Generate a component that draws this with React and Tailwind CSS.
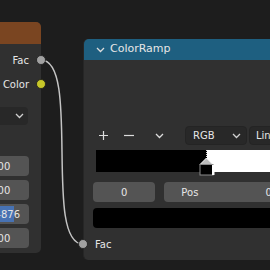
import React from "react";

const font = { fontFamily: '"DejaVu Sans", "Liberation Sans", sans-serif' };

function Chevron({ className = "" }) {
  return (
    <svg width="9" height="6" viewBox="0 0 9 6" className={className}>
      <path d="M1 1 L4.5 4.5 L8 1" fill="none" stroke="currentColor" strokeWidth="1.3" />
    </svg>
  );
}

function ColorStop() {
  return (
    <svg width="18" height="28" viewBox="0 0 18 28" className="absolute left-[102px] top-0">
      <line x1="8.5" y1="0" x2="8.5" y2="9" stroke="#d8d8d8" strokeWidth="1" strokeDasharray="1 1" />
      <path d="M8.5 8 L15 14.5 L2 14.5 Z" fill="#bdbdbd" stroke="#ffffff" strokeWidth="1" />
      <rect x="2" y="14.5" width="13" height="10.5" fill="#000000" stroke="#8a8a8a" strokeWidth="1" />
      <rect x="14" y="15" width="2.5" height="10" fill="#ffffff" />
    </svg>
  );
}

function LeftNode() {
  const fields = ["1.000", "1.000", "edit", "1.000"];
  return (
    <div className="absolute left-[-60px] top-[22px] w-[101px] h-[231px] rounded-[5px] bg-[#303030] flex flex-col">
      <div className="h-[22px] bg-[#7a4521] rounded-t-[5px]" />
      <div className="mt-[6px] h-[20px] flex items-center justify-end pr-[12px] text-[10px] text-[#e6e6e6]">Fac</div>
      <div className="mt-[4px] h-[20px] flex items-center justify-end pr-[12px] text-[10px] text-[#e6e6e6]">Color</div>
      <div className="mt-[13px] mr-[13px] h-[18px] rounded-[4px] bg-[#282828] flex items-center justify-end pr-[4px] text-[#d0d0d0]">
        <Chevron />
      </div>
      <div className="mt-[31px] flex flex-col gap-[4px] items-end pr-[12px]">
        {fields.map((f, i) =>
          f === "edit" ? (
            <div key={i} className="w-[58px] h-[20px] rounded-[4px] bg-[#545454] flex items-center text-[10px] text-[#e6e6e6] overflow-hidden">
              <span className="ml-[12px] h-[16px] flex items-center bg-[#4772b3] pl-[2px]">0.487</span>
              <span className="h-[16px] flex items-center">6</span>
            </div>
          ) : (
            <div key={i} className="w-[58px] h-[20px] rounded-[4px] bg-[#545454] flex items-center justify-center pr-[8px] text-[10px] text-[#e6e6e6]">
              {f}
            </div>
          )
        )}
      </div>
    </div>
  );
}

function ColorRampNode() {
  return (
    <div className="absolute left-[83px] top-[39px] w-[230px] h-[221px] rounded-[5px] bg-[#303030] border-l border-[#262626] flex flex-col">
      <div className="h-[21px] bg-[#1e5f80] rounded-t-[5px] flex items-center pl-[12px] text-[#dcdcdc]">
        <Chevron />
        <span className="ml-[5px] text-[11px] text-[#e6e6e6]">ColorRamp</span>
      </div>
      <div className="mt-[66px] h-[19px] flex items-center pl-[9px] text-[#dcdcdc]">
        <div className="w-[20px] flex justify-center">
          <svg width="9" height="9" viewBox="0 0 9 9">
            <path d="M4.5 0 V9 M0 4.5 H9" stroke="currentColor" strokeWidth="1.2" />
          </svg>
        </div>
        <div className="ml-[6px] w-[20px] flex justify-center">
          <svg width="10" height="9" viewBox="0 0 10 9">
            <path d="M0 4.5 H10" stroke="currentColor" strokeWidth="1.2" />
          </svg>
        </div>
        <div className="ml-[10px] w-[20px] flex justify-center">
          <Chevron />
        </div>
        <div className="ml-[16px] w-[62px] h-[19px] rounded-[4px] bg-[#282828] border border-[#242424] flex items-center justify-between pl-[7px] pr-[5px]">
          <span className="text-[10px] text-[#e6e6e6]">RGB</span>
          <Chevron className="text-[#d0d0d0]" />
        </div>
        <div className="ml-[2px] w-[62px] h-[19px] rounded-[4px] bg-[#282828] border border-[#242424] flex items-center pl-[6px]">
          <span className="text-[10px] text-[#e6e6e6]">Linear</span>
        </div>
      </div>
      <div className="relative mt-[5px] ml-[12px] h-[22px] flex">
        <div className="w-[111px] bg-black" />
        <div className="flex-1 bg-white" />
        <ColorStop />
      </div>
      <div className="mt-[10px] ml-[9px] flex gap-[9px]">
        <div className="w-[63px] h-[20px] rounded-[4px] bg-[#545454] flex items-center justify-center text-[10px] text-[#e6e6e6]">0</div>
        <div className="w-[150px] h-[20px] rounded-[4px] bg-[#545454] flex items-center pl-[17px] text-[10px] text-[#e6e6e6]">
          <span>Pos</span>
          <span className="ml-[67px]">0.500</span>
        </div>
      </div>
      <div className="mt-[6px] ml-[9px] h-[20px] rounded-[4px] bg-black" />
      <div className="mt-[6px] h-[20px] flex items-center pl-[11px] text-[10px] text-[#e6e6e6]">Fac</div>
    </div>
  );
}

export default function App() {
  return (
    <div className="relative w-[270px] h-[270px] overflow-hidden bg-[#1d1d1d]" style={font}>
      <LeftNode />
      <ColorRampNode />
      <svg width="270" height="270" className="absolute left-0 top-0 pointer-events-none">
        <path d="M41 60 C 81 60, 43 244, 83 244" fill="none" stroke="#c4c4c4" strokeWidth="1.5" />
        <circle cx="41" cy="60" r="4.5" fill="#a1a1a1" stroke="#1a1a1a" strokeWidth="0.8" />
        <circle cx="41" cy="84" r="4.5" fill="#c7c729" stroke="#1a1a1a" strokeWidth="0.8" />
        <circle cx="83" cy="244" r="4.5" fill="#a1a1a1" stroke="#1a1a1a" strokeWidth="0.8" />
      </svg>
    </div>
  );
}
